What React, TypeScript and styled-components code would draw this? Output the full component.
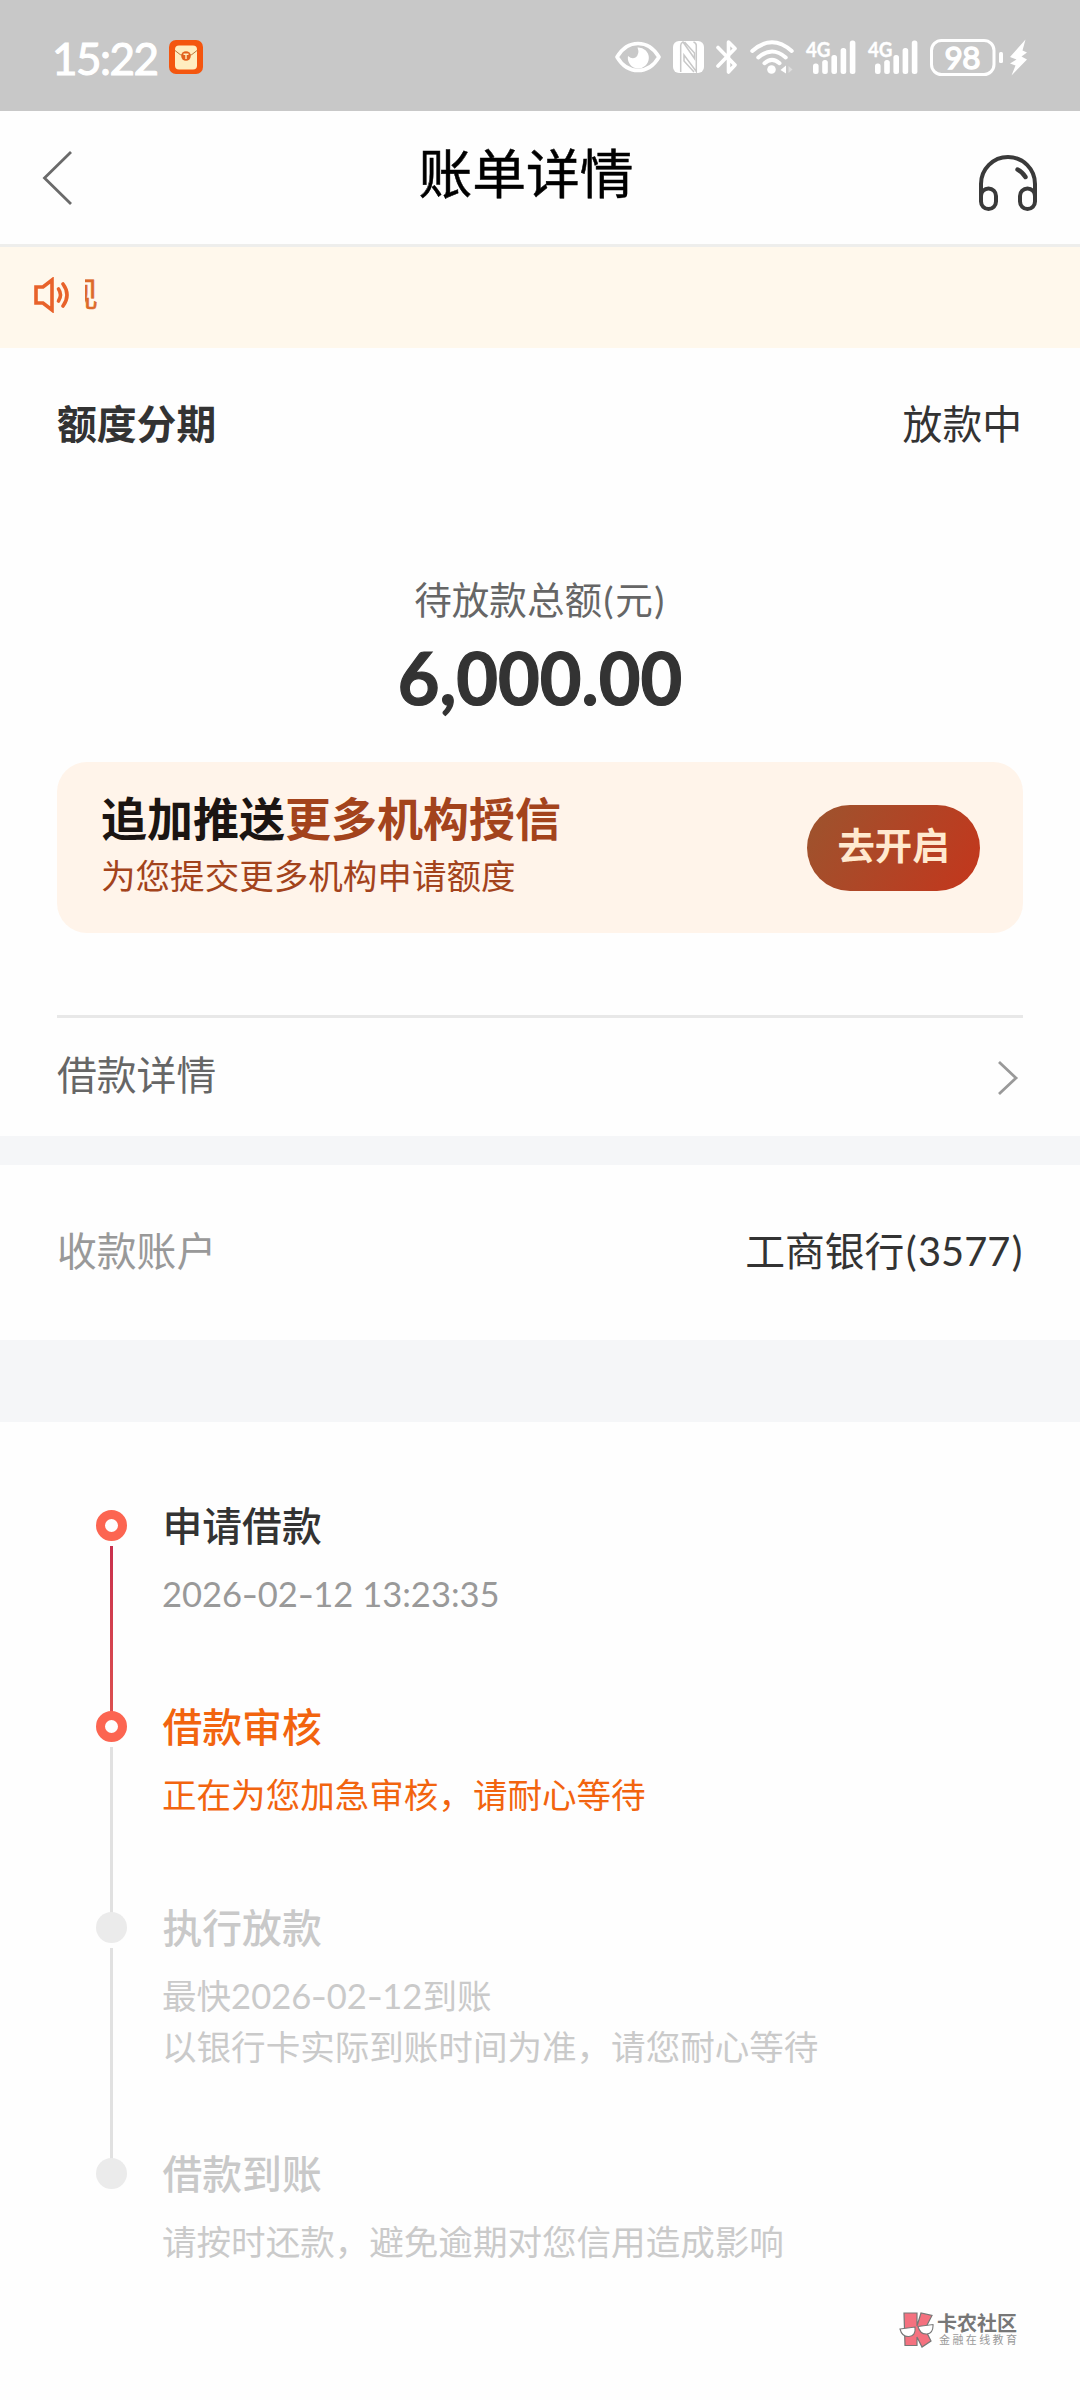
import React from 'react';
import styled, { createGlobalStyle, css } from 'styled-components';

const GlobalStyle = createGlobalStyle`
  * { box-sizing: border-box; }
  html, body { margin: 0; background: #fefefe; }
  body {
    font-family: Lato, "Noto Sans CJK SC", sans-serif;
    color: #333;
    -webkit-font-smoothing: antialiased;
  }
`;

const Screen = styled.main`
  width: 1080px;
  height: 2400px;
  display: flex;
  flex-direction: column;
  background: #fefefe;
  overflow: hidden;
`;

const StatusBar = styled.header`
  height: 111px;
  flex: none;
  padding: 3px 53px 0 52px;
  display: flex;
  align-items: center;
  justify-content: space-between;
  background: #c8c8c8;
  color: #fff;
`;

const StatusGroup = styled.div`
  display: flex;
  align-items: center;
  gap: 12px;
`;

const Clock = styled.span`
  padding-top: 1px;
  font-size: 44px;
  line-height: 50px;
  font-weight: 400;
  letter-spacing: -1.5px;
  -webkit-text-stroke: 1.1px #fff;
  width: 105px;
  white-space: nowrap;
`;

const NavBar = styled.nav`
  height: 136px;
  flex: none;
  padding: 0 43px 0 42px;
  display: flex;
  align-items: center;
  justify-content: space-between;
  border-bottom: 3px solid #eeeeec;
`;

const NavTitle = styled.h1`
  margin: 0 0 10px;
  font-size: 53.8px;
  line-height: 64px;
  font-weight: 400;
  color: #000;
  -webkit-text-stroke: 0.5px #000;
`;

const NavIcon = styled.svg<{ $drop?: number }>`
  display: block;
  margin-top: ${p => p.$drop ?? 0}px;
  overflow: visible;
`;

const Notice = styled.section`
  height: 101px;
  flex: none;
  padding: 0 33px 5px;
  display: flex;
  align-items: center;
  gap: 14px;
  background: #fff8ec;
`;

const Marquee = styled.div`
  width: 13px;
  height: 44px;
  overflow: hidden;
  display: flex;
  justify-content: flex-end;
  font-size: 34.5px;
  line-height: 42px;
  color: #dd6a2a;
  -webkit-text-stroke: 0.5px #dd6a2a;
`;

const Summary = styled.section`
  height: 788px;
  flex: none;
  padding: 0 57px;
  display: flex;
  flex-direction: column;
`;

const Row = styled.div<{ $height: number }>`
  height: ${p => p.$height}px;
  flex: none;
  padding-right: 1px;
  display: flex;
  align-items: center;
  justify-content: space-between;
`;

const Label = styled.span<{ $color?: string; $bold?: boolean }>`
  font-size: 39.8px;
  line-height: 56px;
  white-space: nowrap;
  font-weight: ${p => (p.$bold ? 700 : 400)};
  color: ${p => p.$color ?? '#333'};
`;

const Paren = styled.span`
  padding: 0 1.5px;
`;

const Dash = styled.span`
  display: inline-block;
  width: 15.5px;
  text-align: center;
  transform: scaleX(1.3);
`;

const Amount = styled.div`
  height: 263px;
  padding-top: 73px;
  text-align: center;
`;

const AmountLabel = styled.div`
  font-size: 37.6px;
  line-height: 56px;
  color: #666;
`;

const AmountValue = styled.div`
  margin-top: 7px;
  font-size: 72px;
  line-height: 84px;
  font-weight: 700;
  color: #333;
  -webkit-text-stroke: 1.2px #333;
`;

const Promo = styled.div`
  height: 171px;
  flex: none;
  padding: 0 43px 4px 44px;
  display: flex;
  align-items: center;
  justify-content: space-between;
  border-radius: 30px;
  background: #fff4ea;
`;

const PromoTitle = styled.div`
  font-size: 46px;
  line-height: 58px;
  font-weight: 700;
  color: #1b1512;
`;

const Accent = styled.span`
  color: #a3431c;
`;

const PromoText = styled.div`
  margin-bottom: -1px;
  padding-top: 1px;
  font-size: 34.56px;
  line-height: 54px;
  color: #a3431c;
`;

const PromoButton = styled.button`
  width: 173px;
  height: 86px;
  margin-top: 4px;
  padding: 0 0 7px;
  border: 0;
  border-radius: 43px;
  background: linear-gradient(120deg, #9c542e 0%, #b04526 50%, #c4361c 100%);
  color: #ffe9cf;
  font-family: inherit;
  font-size: 37.4px;
  font-weight: 700;
  white-space: nowrap;
`;

const Divider = styled.hr`
  width: 100%;
  height: 3px;
  margin: 82px 0 0;
  border: 0;
  background: #e8e8e8;
`;

const Band = styled.div<{ $height: number }>`
  height: ${p => p.$height}px;
  flex: none;
  background: #f5f6f8;
`;

const Account = styled.section`
  height: 175px;
  flex: none;
  padding: 0 55px 3px 57px;
`;

const Timeline = styled.ol`
  list-style: none;
  margin: 0;
  padding: 81px 96px 0;
  height: 890px;
  flex: none;
`;

const Step = styled.li<{ $height: number }>`
  display: flex;
  gap: 35.5px;
  height: ${p => p.$height}px;
`;

const Rail = styled.div`
  width: 31px;
  height: 100%;
  padding-top: 7px;
  display: flex;
  flex-direction: column;
  align-items: center;
`;

const Dot = styled.i<{ $active: boolean }>`
  width: 31px;
  height: 31px;
  flex: none;
  border-radius: 50%;
  ${p => (p.$active
    ? css`border: 9px solid #fc6551; background: #fefefe;`
    : css`background: #ebebeb;`)}
`;

const Connector = styled.i<{ $active: boolean }>`
  width: 3px;
  flex: 1;
  margin-top: 5px;
  margin-bottom: -8px;
  background: ${p => (p.$active ? 'linear-gradient(#c9304d, #dc5050)' : '#e1e1e1')};
`;

const StepBody = styled.div`
  white-space: nowrap;
`;

type Tone = 'done' | 'current' | 'pending';
const titleColors: Record<Tone, string> = { done: '#333', current: '#f2640f', pending: '#c9c9c9' };
const textColors: Record<Tone, string> = { done: '#999', current: '#f2640f', pending: '#cacaca' };

const StepTitle = styled.div<{ $tone: Tone }>`
  font-size: 39.8px;
  line-height: 46px;
  font-weight: 500;
  color: ${p => titleColors[p.$tone]};
`;

const StepText = styled.div<{ $tone: Tone }>`
  margin-top: 19px;
  margin-left: -0.5px;
  font-size: 34.56px;
  line-height: 51px;
  color: ${p => textColors[p.$tone]};
`;

const Brand = styled.footer`
  align-self: flex-end;
  margin-right: 63px;
  display: flex;
  align-items: center;
  gap: 3px;
`;

const BrandName = styled.div`
  font-size: 20px;
  line-height: 20px;
  font-weight: 700;
  color: #777;
`;

const BrandTag = styled.div`
  margin-left: 2px;
  font-size: 11px;
  line-height: 14px;
  letter-spacing: 2.4px;
  margin-right: -2.4px;
  color: #999;
`;

const AppBadge = () => (
  <svg width="34" height="34" viewBox="0 0 34 34">
    <rect width="34" height="34" rx="7" fill="#f4560f" />
    <rect x="6" y="5.5" width="22" height="24" rx="4" fill="#ffedc0" />
    <path d="M6 10.5 Q11 16 17 16 Q23 16 28 10.5" fill="none" stroke="#b9783c" strokeWidth="1" />
    <circle cx="17" cy="16" r="4.8" fill="#e2611f" />
    <path d="M14.5 14.2h5M17 14.2v4.8" stroke="#ffedc0" strokeWidth="1.4" />
  </svg>
);

const EyeIcon = () => (
  <svg width="46" height="32" viewBox="0 0 46 32">
    <path d="M2 16 Q10 2.5 23 2.5 Q36 2.5 44 16 Q36 29.5 23 29.5 Q10 29.5 2 16Z" fill="none" stroke="#fff" strokeWidth="3.6" strokeLinejoin="round" />
    <path d="M22.5 6.5 A10.5 10.5 0 1 1 13 15 Q17 18.5 20.5 16.5 Q25 13 22.5 6.5Z" fill="#fff" />
  </svg>
);

const NfcIcon = () => (
  <svg width="31" height="32" viewBox="0 0 31 32">
    <rect width="31" height="32" rx="6" fill="#fff" />
    <path d="M7.7 31 V4.5 Q7.7 2 10 1 L21.5 17.5 V12 L11.5 1" fill="none" stroke="#c8c8c8" strokeWidth="1.5" />
    <path d="M20.5 1 Q23.3 2 23.3 4.5 V30.5 L11 14 V20 L21 31" fill="none" stroke="#c8c8c8" strokeWidth="1.5" />
  </svg>
);

const BluetoothIcon = () => (
  <svg width="22" height="36" viewBox="0 0 22 36">
    <path d="M2 8.5 L19 26 L12.5 33 V3 L19 9.5 L2 27" fill="none" stroke="#fff" strokeWidth="3.6" strokeLinejoin="round" strokeLinecap="round" />
  </svg>
);

const WifiIcon = () => (
  <svg width="44" height="34" viewBox="0 0 44 34">
    <g fill="none" stroke="#fff" strokeWidth="4" strokeLinecap="round">
      <path d="M2.3 11 Q22 -6.5 41.7 11" />
      <path d="M8.3 17.5 Q22 5.5 35.7 17.5" />
      <path d="M14.5 23.2 Q22 16.5 29.5 23.2" />
    </g>
    <circle cx="21.5" cy="29.5" r="4.3" fill="#fff" />
    <path d="M36 25.5 V33.5 L30.5 30Z" fill="#fff" />
    <path d="M38.5 26 L42.5 29.5 L38.5 33Z" fill="#dedede" />
  </svg>
);

const SignalSvg = styled.svg`
  overflow: visible;
`;

const SignalIcon = () => (
  <SignalSvg width="50" height="34" viewBox="0 0 50 34">
    <text x="0" y="16.5" fill="#fff" stroke="#fff" strokeWidth="0.4" fontFamily="Lato, sans-serif" fontWeight="700" fontSize="21.5" textLength="24.5" lengthAdjust="spacingAndGlyphs">4G</text>
    {[[7, 10.5], [16.2, 14], [25.4, 19], [34.6, 26], [43.8, 33.5]].map(([x, h]) => (
      <rect key={x} x={x} y={34 - h} width="5.6" height={h} rx="2.5" fill="#fff" />
    ))}
  </SignalSvg>
);

const BatteryIcon = () => (
  <svg width="97" height="37" viewBox="0 0 97 37">
    <rect x="1.5" y="1.5" width="62.5" height="34" rx="10" fill="none" stroke="#fff" strokeWidth="3" />
    <text x="32.5" y="29.8" textAnchor="middle" fill="#fff" stroke="#fff" strokeWidth="1.4" fontFamily="Lato, sans-serif" fontWeight="400" fontSize="31.5" textLength="36">98</text>
    <rect x="69" y="13" width="4" height="11" rx="1.5" fill="#fff" />
    <path d="M95.5 0.5 L80 18 L86.5 20.5 L80 24.5 L85.5 26.5 L81.5 36.5 L97 20.5 L91.5 17.5 L97 13.5 L92.5 11.5Z" fill="#fff" />
  </svg>
);

const BackIcon = () => (
  <NavIcon width="31" height="54" viewBox="0 0 31 54">
    <path d="M29 1 L2.5 27 L29 53" fill="none" stroke="#6a6a6a" strokeWidth="2.8" />
  </NavIcon>
);

const HeadsetIcon = () => (
  <NavIcon $drop={10} width="58" height="56" viewBox="0 0 58 56">
    <g fill="none" stroke="#3a3a3a" strokeWidth="4" strokeLinecap="round">
      <path d="M2 45 V29 A27 27 0 0 1 56 29 V45" />
      <rect x="2" y="33.5" width="15" height="20.5" rx="7.5" />
      <rect x="41" y="33.5" width="15" height="20.5" rx="7.5" />
      <path d="M38.5 14.5 Q43.5 17 46.5 22" strokeWidth="4.4" />
    </g>
  </NavIcon>
);

const SpeakerIcon = () => (
  <svg width="38" height="36" viewBox="0 0 38 36">
    <g fill="none" stroke="#e8622a" strokeWidth="3.6">
      <path d="M3 10 H10 L19 3 V33 L10 26 H3Z" />
      <path d="M25.5 12 Q29.5 17.8 25.5 24" strokeLinecap="round" />
      <path d="M30 7 Q38 17.8 30 29" strokeLinecap="round" />
    </g>
  </svg>
);

const ChevronIcon = () => (
  <NavIcon $drop={5} width="24" height="34" viewBox="0 0 24 34">
    <path d="M1 1 L18 17 L1 33" fill="none" stroke="#999" strokeWidth="2.8" />
  </NavIcon>
);

const BrandMark = () => (
  <svg width="35" height="36" viewBox="0 0 35 36">
    <path d="M5 1 H18 V14 L22 1 L33 3.5 L26 17 L32 29 L23 35 L18 25 V33.5 H6Z" fill="#f4717f" stroke="#777" strokeWidth="1.2" />
    <g fill="#fff" stroke="#777" strokeWidth="1.1">
      <path d="M1 17 L16 15 Q17 24 10 24.5 Q3 25 1 17Z" />
      <path d="M19 14.5 L34 12.5 Q34.5 21 28 22 Q21 22.5 19 14.5Z" />
    </g>
  </svg>
);

interface StepData {
  title: string;
  lines: string[];
  tone: Tone;
  height: number;
}

const steps: StepData[] = [
  { title: '申请借款', lines: ['2026-02-12 13:23:35'], tone: 'done', height: 201 },
  { title: '借款审核', lines: ['正在为您加急审核，请耐心等待'], tone: 'current', height: 201 },
  { title: '执行放款', lines: ['最快2026-02-12到账', '以银行卡实际到账时间为准，请您耐心等待'], tone: 'pending', height: 246 },
  { title: '借款到账', lines: ['请按时还款，避免逾期对您信用造成影响'], tone: 'pending', height: 140 },
];

const withDashes = (line: string) =>
  line.split('-').map((part, i) => (
    <React.Fragment key={i}>
      {i > 0 && <Dash>-</Dash>}
      {part}
    </React.Fragment>
  ));

export default function App() {
  return (
    <Screen lang="zh-CN">
      <GlobalStyle />
      <StatusBar>
        <StatusGroup>
          <Clock>15:22</Clock>
          <AppBadge />
        </StatusGroup>
        <StatusGroup>
          <EyeIcon />
          <NfcIcon />
          <BluetoothIcon />
          <WifiIcon />
          <SignalIcon />
          <SignalIcon />
          <BatteryIcon />
        </StatusGroup>
      </StatusBar>
      <NavBar>
        <BackIcon />
        <NavTitle>账单详情</NavTitle>
        <HeadsetIcon />
      </NavBar>
      <Notice>
        <SpeakerIcon />
        <Marquee>现</Marquee>
      </Notice>
      <Summary>
        <Row $height={151}>
          <Label $bold>额度分期</Label>
          <Label>放款中</Label>
        </Row>
        <Amount>
          <AmountLabel>待放款总额<Paren>(</Paren>元<Paren>)</Paren></AmountLabel>
          <AmountValue>6,000.00</AmountValue>
        </Amount>
        <Promo>
          <div>
            <PromoTitle>追加推送<Accent>更多机构授信</Accent></PromoTitle>
            <PromoText>为您提交更多机构申请额度</PromoText>
          </div>
          <PromoButton>去开启</PromoButton>
        </Promo>
        <Divider />
        <Row $height={114}>
          <Label $color="#666">借款详情</Label>
          <ChevronIcon />
        </Row>
      </Summary>
      <Band $height={29} />
      <Account>
        <Row $height={172}>
          <Label $color="#999">收款账户</Label>
          <Label>工商银行<Paren>(</Paren>3577<Paren>)</Paren></Label>
        </Row>
      </Account>
      <Band $height={82} />
      <Timeline>
        {steps.map((step, i) => (
          <Step key={step.title} $height={step.height}>
            <Rail>
              <Dot $active={step.tone !== 'pending'} />
              {i < steps.length - 1 && <Connector $active={step.tone === 'done'} />}
            </Rail>
            <StepBody>
              <StepTitle $tone={step.tone}>{step.title}</StepTitle>
              <StepText $tone={step.tone}>
                {step.lines.map(line => <div key={line}>{withDashes(line)}</div>)}
              </StepText>
            </StepBody>
          </Step>
        ))}
      </Timeline>
      <Brand>
        <BrandMark />
        <div>
          <BrandName>卡农社区</BrandName>
          <BrandTag>金融在线教育</BrandTag>
        </div>
      </Brand>
    </Screen>
  );
}
